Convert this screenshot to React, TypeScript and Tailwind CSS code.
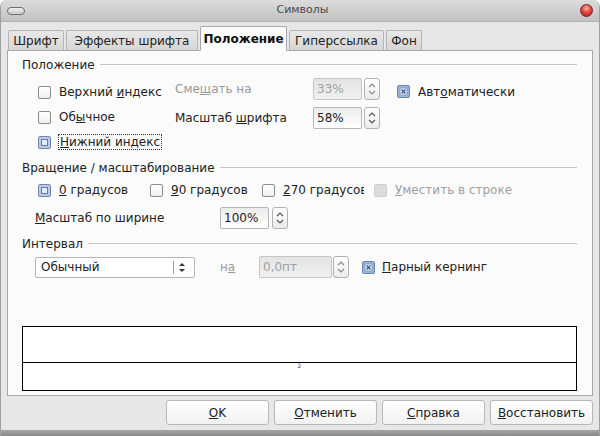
import React from "react";

type BoxState = "off" | "radio" | "check" | "disabled";

function Box({ state }: { state: BoxState }) {
  if (state === "check") {
    return (
      <svg width="13" height="13" viewBox="0 0 13 13" className="shrink-0">
        <rect x="0.5" y="0.5" width="12" height="12" rx="1.5" fill="#9db6da" stroke="#6684b0" />
        <rect x="3" y="3" width="7" height="7" fill="#e6edf7" stroke="#7893bb" strokeWidth="0.8" />
        <path d="M4.6 4.6 L8.4 8.4 M8.4 4.6 L4.6 8.4" stroke="#3f5f92" strokeWidth="1.4" />
      </svg>
    );
  }
  if (state === "radio") {
    return (
      <svg width="13" height="13" viewBox="0 0 13 13" className="shrink-0">
        <rect x="0.5" y="0.5" width="12" height="12" rx="1.5" fill="#b9cae2" stroke="#7088ad" />
        <rect x="3.5" y="3.5" width="6" height="6" fill="#e3ebf6" stroke="#5f7ba5" />
      </svg>
    );
  }
  if (state === "disabled") {
    return <div className="w-[13px] h-[13px] shrink-0 rounded-[2px] border border-[#cfcfcf] bg-[#dcdcdc]" />;
  }
  return (
    <div className="w-[13px] h-[13px] shrink-0 rounded-[2px] border border-[#8c8c8c] bg-gradient-to-b from-white to-[#eeeeee]" />
  );
}

function Spin({ disabled }: { disabled?: boolean }) {
  const c = disabled ? "#8a8a8a" : "#555555";
  return (
    <div className="w-[16px] h-[22px] shrink-0 rounded-[3px] border border-[#b2b2b2] bg-gradient-to-b from-white to-[#ececec] flex items-center justify-center">
      <svg width="10" height="16" viewBox="0 0 10 16">
        <path d="M2 6 L5 3 L8 6" fill="none" stroke={c} strokeWidth="1.2" />
        <path d="M2 10 L5 13 L8 10" fill="none" stroke={c} strokeWidth="1.2" />
      </svg>
    </div>
  );
}

function Field({ value, width, disabled }: { value: string; width: string; disabled?: boolean }) {
  return (
    <div
      className={`${width} h-[22px] shrink-0 rounded-[2px] border flex items-center pl-[3px] ${
        disabled
          ? "border-[#c6c6c6] bg-gradient-to-b from-[#e4e4e4] to-[#f0f0f0] text-[#a0a0a0]"
          : "border-[#b6b6b6] bg-gradient-to-b from-[#ececec] to-white text-[#222]"
      }`}
    >
      {value}
    </div>
  );
}

function Heading({ children }: { children: React.ReactNode }) {
  return (
    <div className="flex items-center h-[14px] gap-[5px]">
      <span className="leading-[14px]">{children}</span>
      <div className="flex-1 border-t border-[#c4c4c4] border-b-white border-b" />
    </div>
  );
}

function Tab({ label, width, active }: { label: string; width: string; active?: boolean }) {
  if (active) {
    return (
      <div
        className={`${width} h-[25px] -mb-px relative z-10 bg-[#fbfbfb] border border-[#a8a8a8] border-b-[#fbfbfb] rounded-t-[2px] flex items-center justify-center font-bold text-[#111]`}
      >
        {label}
      </div>
    );
  }
  return (
    <div
      className={`${width} h-[20px] bg-gradient-to-b from-[#e8e8e8] to-[#d6d6d6] border border-b-0 border-[#b4b4b4] rounded-t-[2px] flex items-center justify-center text-[#222]`}
    >
      {label}
    </div>
  );
}

function Button({ children }: { children: React.ReactNode }) {
  return (
    <div className="w-[103px] h-[25px] rounded-[3px] border border-[#b8b8b8] bg-gradient-to-b from-white to-[#f1f1f1] flex items-center justify-center text-[#222]">
      {children}
    </div>
  );
}

export default function App() {
  return (
    <div className="w-[600px] h-[436px] bg-white overflow-hidden text-[12px] text-[#222] [font-family:'DejaVu_Sans',sans-serif]">
      <div className="w-full h-full flex flex-col rounded-t-[7px] bg-[#e7e7e7] border-x border-[#9f9f9f] overflow-hidden">
        {/* title bar */}
        <div className="h-[22px] shrink-0 bg-gradient-to-b from-[#dcdcdc] to-[#c2c2c2] border-b border-[#b0b0b0] flex items-center px-[6px]">
          <div className="w-[18px] h-[8px] rounded-full border border-[#6e6e6e] bg-gradient-to-b from-[#f2f2f2] to-[#c8c8c8]" />
          <div className="flex-1 text-center text-[11px] text-[#4a4a4a]">Символы</div>
          <div className="w-[13px] h-[13px] rounded-full border border-[#7a2020] bg-[radial-gradient(circle_at_50%_30%,#ffb0a8_0%,#e04a40_45%,#a41a14_100%)]" />
        </div>

        {/* tabs */}
        <div className="h-[28px] shrink-0 flex items-end gap-[2px] pl-[7px]">
          <Tab label="Шрифт" width="w-[56px]" />
          <Tab label="Эффекты шрифта" width="w-[132px]" />
          <Tab label="Положение" width="w-[87px]" active />
          <Tab label="Гиперссылка" width="w-[95px]" />
          <Tab label="Фон" width="w-[36px]" />
        </div>

        {/* panel */}
        <div className="mx-[6px] h-[346px] shrink-0 border border-[#a8a8a8] bg-[#fbfbfb] pl-[14px] pr-[15px] pt-[7px] flex flex-col">
          <Heading>Положение</Heading>

          <div className="flex">
            <div className="w-[153px] shrink-0 pl-[16px] pt-[11px] flex flex-col gap-[8px] whitespace-nowrap">
              <div className="h-[18px] flex items-center gap-[8px]">
                <Box state="off" />
                <span>Верхний <u>и</u>ндекс</span>
              </div>
              <div className="h-[18px] flex items-center gap-[8px] -mt-[1px]">
                <Box state="off" />
                <span>Об<u>ы</u>чное</span>
              </div>
              <div className="h-[18px] flex items-center gap-[7px] -mt-[1px]">
                <Box state="radio" />
                <span className="border border-dotted border-[#333] px-[1px] leading-[14px]">
                  <u>Н</u>ижний индекс
                </span>
              </div>
            </div>

            <div className="pt-[6px] flex flex-col gap-[7px] whitespace-nowrap">
              <div className="h-[22px] flex items-center">
                <span className="w-[138px] text-[#9a9a9a]">Сме<u>щ</u>ать на</span>
                <Field value="33%" width="w-[49px]" disabled />
                <div className="ml-[2px]">
                  <Spin disabled />
                </div>
                <div className="ml-[17px] mt-[5px] flex items-center gap-[8px]">
                  <Box state="check" />
                  <span>Авт<u>о</u>матически</span>
                </div>
              </div>
              <div className="h-[22px] flex items-center">
                <span className="w-[138px]">Масштаб <u>ш</u>рифта</span>
                <Field value="58%" width="w-[49px]" />
                <div className="ml-[2px]">
                  <Spin />
                </div>
              </div>
            </div>
          </div>

          <div className="mt-[10px]">
            <Heading>Вращение / масштабирование</Heading>
          </div>

          <div className="mt-[6px] h-[18px] flex items-center pl-[16px] whitespace-nowrap">
            <div className="w-[112px] flex items-center gap-[8px]">
              <Box state="radio" />
              <span><u>0</u> градусов</span>
            </div>
            <div className="w-[112px] flex items-center gap-[8px]">
              <Box state="off" />
              <span><u>9</u>0 градусов</span>
            </div>
            <div className="w-[112px] flex items-center gap-[8px]">
              <Box state="off" />
              <span className="w-[81px] overflow-hidden"><u>2</u>70 градусов</span>
            </div>
            <div className="flex items-center gap-[8px]">
              <Box state="disabled" />
              <span className="text-[#a0a0a0]"><u>У</u>местить в строке</span>
            </div>
          </div>

          <div className="mt-[8px] h-[22px] flex items-center pl-[13px]">
            <span className="w-[185px]"><u>М</u>асштаб по ширине</span>
            <Field value="100%" width="w-[49px]" />
            <div className="ml-[3px]">
              <Spin />
            </div>
          </div>

          <div className="mt-[8px]">
            <Heading>Интервал</Heading>
          </div>

          <div className="mt-[5px] h-[22px] flex items-center pl-[13px] whitespace-nowrap">
            <div className="w-[160px] h-[21px] rounded-[2px] border border-[#b6b6b6] bg-white flex items-center pl-[5px]">
              <span className="flex-1">Обычный</span>
              <div className="w-px h-[13px] bg-[#9a9a9a]" />
              <svg width="14" height="13" viewBox="0 0 14 13" className="mr-[5px] ml-[1px]">
                <path d="M4 5 L7 2 L10 5 Z" fill="#333" />
                <path d="M4 8 L7 11 L10 8 Z" fill="#333" />
              </svg>
            </div>
            <span className="w-[39px] ml-[25px] text-[#9a9a9a]">н<u>а</u></span>
            <Field value="0,0пт" width="w-[73px]" disabled />
            <div className="ml-[1px]">
              <Spin disabled />
            </div>
            <div className="ml-[13px] flex items-center gap-[7px]">
              <Box state="check" />
              <span><u>П</u>арный кернинг</span>
            </div>
          </div>

          <div className="mt-[48px] h-[65px] border border-black bg-white flex flex-col">
            <div className="h-[36px] border-b border-black" />
            <div className="flex justify-center text-[6px] leading-[6px] text-[#444]">2</div>
          </div>
        </div>

        {/* buttons */}
        <div className="mt-[4px] flex gap-[5px] pl-[165px]">
          <Button><u>O</u>K</Button>
          <Button><u>О</u>тменить</Button>
          <Button><u>С</u>правка</Button>
          <Button><u>В</u>осстановить</Button>
        </div>

        <div className="mt-auto h-[6px] bg-gradient-to-b from-[#a6a6a6] to-[#8a8a8a]" />
      </div>
    </div>
  );
}
